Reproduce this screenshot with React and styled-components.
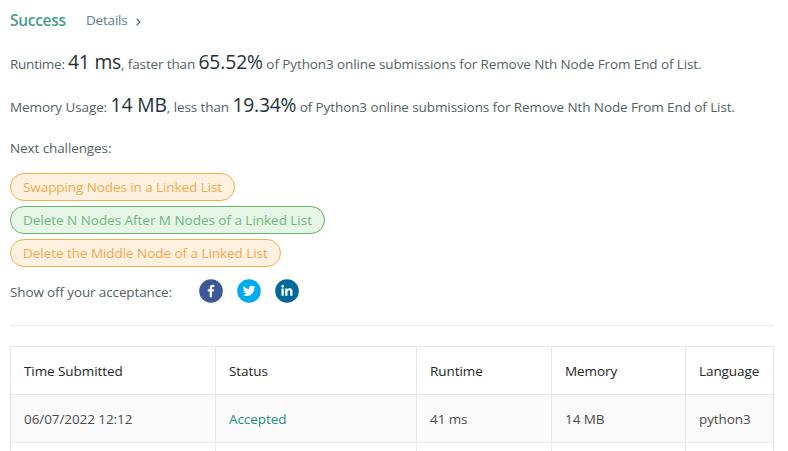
import React from 'react';
import styled, { createGlobalStyle } from 'styled-components';

const GlobalStyle = createGlobalStyle`
  * { box-sizing: border-box; }
  body {
    margin: 0;
    background: #fff;
    color: #546266;
    font-family: "Open Sans", "Noto Sans", sans-serif;
    font-size: 13.5px;
    overflow: hidden;
  }
`;

const Page = styled.main`
  width: 788px;
  height: 451px;
  overflow: hidden;
  padding: 8px 14px 0 10px;
`;

const Header = styled.header`
  display: flex;
  align-items: center;
  height: 24px;
`;

const Result = styled.span`
  width: 76px;
  font-size: 15.5px;
  font-weight: 600;
  letter-spacing: -0.3px;
  color: #459c8b;
`;

const DetailsLink = styled.a`
  display: flex;
  align-items: center;
  gap: 8px;
  color: #607d8b;
  letter-spacing: -0.2px;
`;

const Chevron = styled.svg`
  display: block;
  margin-top: 3px;
`;

const Summary = styled.p`
  display: flex;
  align-items: baseline;
  white-space: pre;
  margin: ${(p) => p.$top}px 0 0;
  height: 30px;
  line-height: 30px;
`;

const Phrase = styled.span`
  letter-spacing: ${(p) => p.$spacing || 0}px;
`;

const Figure = styled.span`
  font-size: 19.3px;
  color: #263238;
  letter-spacing: ${(p) => p.$spacing || 0}px;
`;

const Caption = styled.div`
  margin-top: 17px;
  height: 22px;
  line-height: 22px;
  letter-spacing: -0.1px;
`;

const Challenges = styled.div`
  display: flex;
  flex-direction: column;
  align-items: flex-start;
  gap: 5px;
  margin-top: 14px;
`;

const tones = {
  medium: { ink: '#efa94f', line: '#f0ad4e', fill: '#fff1e0' },
  easy: { ink: '#72b877', line: '#66b56b', fill: '#e5f5e7' },
};

const Pill = styled.a`
  height: 28px;
  padding: 0 12px;
  border: 1px solid ${(p) => tones[p.$tone].line};
  border-radius: 14px;
  background: ${(p) => tones[p.$tone].fill};
  color: ${(p) => tones[p.$tone].ink};
  line-height: 26px;
  white-space: nowrap;
  letter-spacing: ${(p) => p.$spacing || 0}px;
`;

const Share = styled.div`
  display: flex;
  align-items: center;
  height: 24px;
  margin-top: 12px;
`;

const ShareLabel = styled.span`
  width: 189px;
  padding-top: 2px;
  letter-spacing: -0.13px;
`;

const ShareIcons = styled.div`
  display: flex;
  gap: 14px;
`;

const Icon = styled.svg`
  display: block;
  width: 24px;
  height: 24px;
`;

const Divider = styled.hr`
  height: 1px;
  border: 0;
  margin: 22px 0 20px;
  background: #ececec;
`;

const Table = styled.div`
  width: 764px;
  border: solid #e8e8e8;
  border-width: 1px 1px 0 1px;
`;

const Row = styled.div`
  display: grid;
  grid-template-columns: 205px 201px 135px 134px 87px;
  height: 48px;
  border-bottom: 1px solid #e8e8e8;
  background: ${(p) => (p.$shaded ? '#fafafa' : '#fff')};
  color: ${(p) => (p.$head ? '#262626' : '#4d4d4d')};
`;

const Cell = styled.div`
  padding: 0 0 0 13px;
  line-height: 48px;
  white-space: nowrap;
  border-right: 1px solid #e8e8e8;
  color: ${(p) => (p.$accepted ? '#218f7c' : 'inherit')};
  letter-spacing: -0.08px;

  &:last-child { border-right: 0; }
`;

const TWITTER =
  'M23.95 4.57a10 10 0 0 1-2.82.77 4.96 4.96 0 0 0 2.16-2.72c-.95.55-2 .96-3.13 1.18a4.92 4.92 0 0 0-8.38 4.48C7.69 8.1 4.07 6.13 1.64 3.16a4.92 4.92 0 0 0 1.52 6.57 4.9 4.9 0 0 1-2.23-.61v.06a4.92 4.92 0 0 0 3.95 4.83 5 5 0 0 1-2.21.08 4.94 4.94 0 0 0 4.6 3.42A9.87 9.87 0 0 1 0 19.54a13.99 13.99 0 0 0 7.55 2.21c9.05 0 14-7.5 14-13.98 0-.21 0-.42-.02-.63a9.94 9.94 0 0 0 2.42-2.57z';

const challenges = [
  { title: 'Swapping Nodes in a Linked List', tone: 'medium', spacing: -0.08 },
  { title: 'Delete N Nodes After M Nodes of a Linked List', tone: 'easy', spacing: -0.03 },
  { title: 'Delete the Middle Node of a Linked List', tone: 'medium', spacing: -0.05 },
];

export default function App() {
  return (
    <>
      <GlobalStyle />
      <Page>
        <Header>
          <Result>Success</Result>
          <DetailsLink>
            Details
            <Chevron width="5" height="8" viewBox="0 0 5 8">
              <path d="M0.7 0.8 4 4 0.7 7.2" fill="none" stroke="#546e7a" strokeWidth="1.2" />
            </Chevron>
          </DetailsLink>
        </Header>

        <Summary $top={15}>
          <Phrase $spacing={-0.25}>Runtime: </Phrase>
          <Figure $spacing={-0.2}>41 ms</Figure>
          <Phrase $spacing={-0.14}>, faster than </Phrase>
          <Figure $spacing={-0.1}>65.52%</Figure>
          <Phrase $spacing={-0.1}> of Python3 online submissions for Remove Nth Node From End of List.</Phrase>
        </Summary>
        <Summary $top={13}>
          <Phrase $spacing={-0.1}>Memory Usage: </Phrase>
          <Figure $spacing={-0.1}>14 MB</Figure>
          <Phrase $spacing={-0.1}>, less than </Phrase>
          <Figure $spacing={-0.2}>19.34%</Figure>
          <Phrase $spacing={-0.1}> of Python3 online submissions for Remove Nth Node From End of List.</Phrase>
        </Summary>

        <Caption>Next challenges:</Caption>
        <Challenges>
          {challenges.map((c) => (
            <Pill key={c.title} $tone={c.tone} $spacing={c.spacing}>{c.title}</Pill>
          ))}
        </Challenges>

        <Share>
          <ShareLabel>Show off your acceptance:</ShareLabel>
          <ShareIcons>
            <Icon viewBox="0 0 24 24">
              <circle cx="12" cy="12" r="11.8" fill="#3b5998" />
              <path d="M13 18.3v-5.7h1.9l.3-2.3H13V9c0-.65.2-1.1 1.15-1.1h1.15V5.9c-.3-.05-.9-.1-1.7-.1-1.8 0-2.9 1.05-2.9 2.9v1.6H8.8v2.3h1.9v5.7z" fill="#fff" />
            </Icon>
            <Icon viewBox="0 0 24 24">
              <circle cx="12" cy="12" r="11.8" fill="#00aced" />
              <g transform="translate(5.8 5.5) scale(0.53)">
                <path d={TWITTER} fill="#fff" />
              </g>
            </Icon>
            <Icon viewBox="0 0 24 24">
              <circle cx="12" cy="12" r="11.8" fill="#00699a" />
              <circle cx="7.7" cy="7.3" r="1.35" fill="#fff" />
              <path d="M6.5 9.5h2.3v7.3H6.5zM10.2 9.5h2.2v1c.4-.7 1.2-1.2 2.3-1.2 2.3 0 2.8 1.5 2.8 3.5v4h-2.3v-3.55c0-.95-.1-1.9-1.2-1.9s-1.5.85-1.5 1.9v3.55h-2.3z" fill="#fff" />
            </Icon>
          </ShareIcons>
        </Share>

        <Divider />

        <Table>
          <Row $head>
            <Cell>Time Submitted</Cell>
            <Cell>Status</Cell>
            <Cell>Runtime</Cell>
            <Cell>Memory</Cell>
            <Cell>Language</Cell>
          </Row>
          <Row $shaded>
            <Cell>06/07/2022 12:12</Cell>
            <Cell $accepted>Accepted</Cell>
            <Cell>41 ms</Cell>
            <Cell>14 MB</Cell>
            <Cell>python3</Cell>
          </Row>
          <Row>
            <Cell />
            <Cell />
            <Cell />
            <Cell />
            <Cell />
          </Row>
        </Table>
      </Page>
    </>
  );
}
